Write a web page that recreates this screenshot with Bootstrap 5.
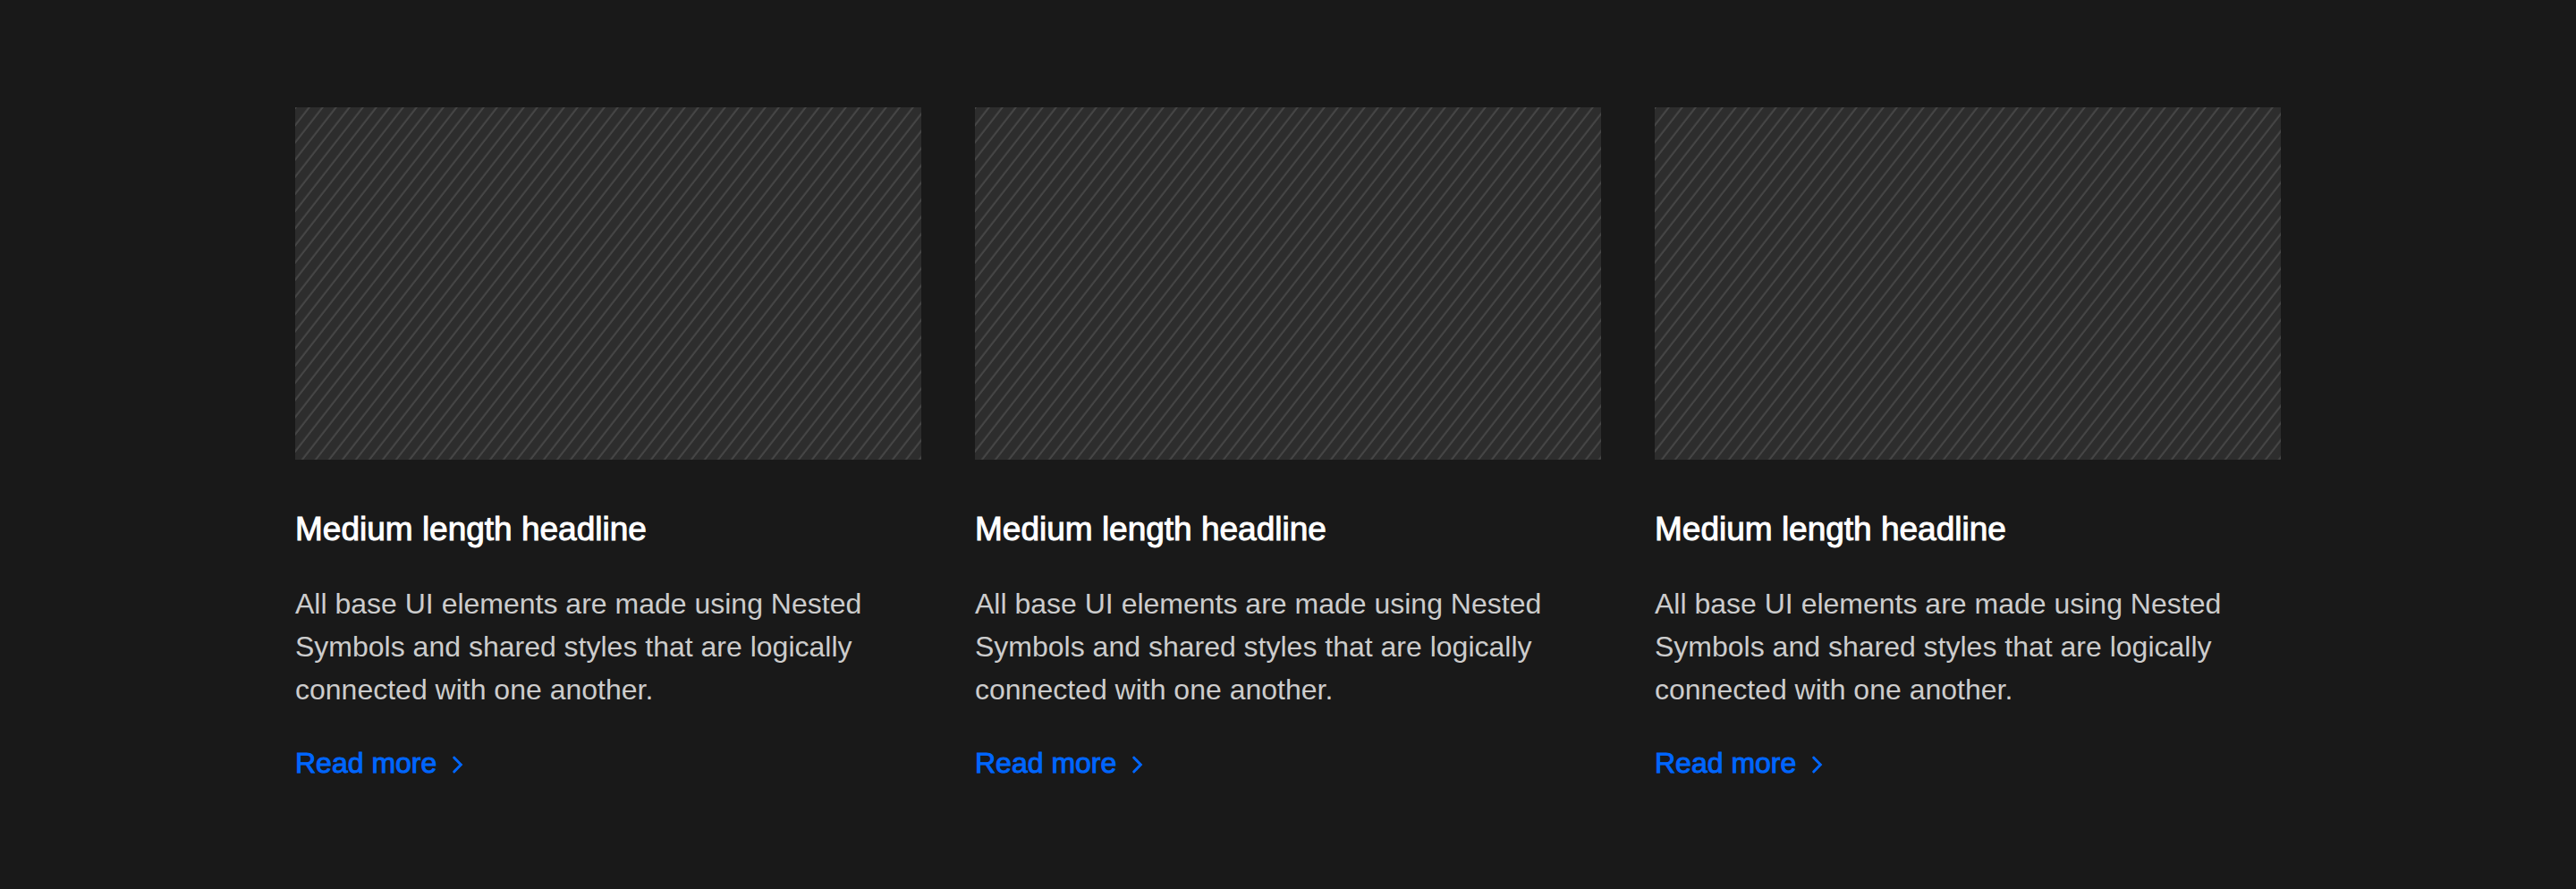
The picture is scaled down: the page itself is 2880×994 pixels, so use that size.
<!DOCTYPE html>
<html lang="en">
<head>
<meta charset="utf-8">
<meta name="viewport" content="width=device-width, initial-scale=1">
<title>Features</title>
<link href="https://cdn.jsdelivr.net/npm/bootstrap@5.3.0/dist/css/bootstrap.min.css" rel="stylesheet">
<style>
  body { background: #191919; color: #fff; font-family: "Liberation Sans", Arial, sans-serif; }
  .features { max-width: 2280px; padding: 120px 30px; }
  .features .row { --bs-gutter-x: 60px; --bs-gutter-y: 60px; }
  .placeholder-art { background: #2d2d2d; }
  .feature-title { font-size: 37px; line-height: 48px; margin: 54px 0 35px; font-weight: 400; -webkit-text-stroke: 1px currentColor; }
  .feature-text { font-size: 32px; line-height: 48px; color: #ccc; margin-bottom: 36px; }
  .feature-link { font-size: 32px; line-height: 44px; color: #0066ff; gap: 18px; -webkit-text-stroke: 1px currentColor; }
  .feature-link:hover { color: #4d94ff; }
</style>
</head>
<body>
<svg width="0" height="0" class="position-absolute" aria-hidden="true">
  <defs>
    <pattern id="hatch" x="-7" width="15" height="100" patternUnits="userSpaceOnUse" patternTransform="skewX(-38)">
      <path d="M7.7 0V100" stroke="#464646" stroke-width="2.6"/>
    </pattern>
  </defs>
</svg>
<main class="container-fluid features">
  <div class="row row-cols-1 row-cols-md-3">
    <article class="col">
      <div class="ratio ratio-16x9 placeholder-art"><svg aria-hidden="true"><rect width="100%" height="100%" fill="url(#hatch)"/></svg></div>
      <h2 class="feature-title">Medium length headline</h2>
      <p class="feature-text">All base UI elements are made using Nested Symbols and shared styles that are logically connected with one another.</p>
      <a href="#" class="feature-link d-inline-flex align-items-center text-decoration-none">Read more
        <svg class="mt-1" width="12" height="20" viewBox="0 0 12 20" fill="none" stroke="currentColor" stroke-width="3" stroke-linecap="round" aria-hidden="true"><path d="M1.8 2.2L9.3 10L1.8 17.8"/></svg></a>
    </article>
    <article class="col">
      <div class="ratio ratio-16x9 placeholder-art"><svg aria-hidden="true"><rect width="100%" height="100%" fill="url(#hatch)"/></svg></div>
      <h2 class="feature-title">Medium length headline</h2>
      <p class="feature-text">All base UI elements are made using Nested Symbols and shared styles that are logically connected with one another.</p>
      <a href="#" class="feature-link d-inline-flex align-items-center text-decoration-none">Read more
        <svg class="mt-1" width="12" height="20" viewBox="0 0 12 20" fill="none" stroke="currentColor" stroke-width="3" stroke-linecap="round" aria-hidden="true"><path d="M1.8 2.2L9.3 10L1.8 17.8"/></svg></a>
    </article>
    <article class="col">
      <div class="ratio ratio-16x9 placeholder-art"><svg aria-hidden="true"><rect width="100%" height="100%" fill="url(#hatch)"/></svg></div>
      <h2 class="feature-title">Medium length headline</h2>
      <p class="feature-text">All base UI elements are made using Nested Symbols and shared styles that are logically connected with one another.</p>
      <a href="#" class="feature-link d-inline-flex align-items-center text-decoration-none">Read more
        <svg class="mt-1" width="12" height="20" viewBox="0 0 12 20" fill="none" stroke="currentColor" stroke-width="3" stroke-linecap="round" aria-hidden="true"><path d="M1.8 2.2L9.3 10L1.8 17.8"/></svg></a>
    </article>
  </div>
</main>
<script src="https://cdn.jsdelivr.net/npm/bootstrap@5.3.0/dist/js/bootstrap.bundle.min.js"></script>
</body>
</html>
